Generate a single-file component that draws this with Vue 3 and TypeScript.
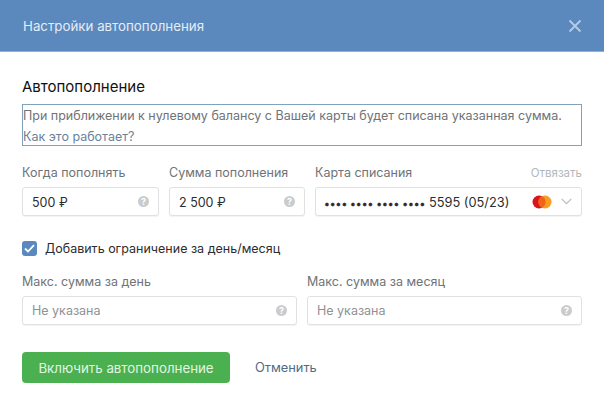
<script setup lang="ts">
import { ref } from 'vue'

const limitEnabled = ref(true)
</script>

<template>
  <div class="modal">
    <header class="modal-head">
      <span class="modal-title">Настройки автопополнения</span>
      <svg class="close" width="14" height="14" viewBox="0 0 14 14">
        <path d="M1.5 1.5l11 11M12.5 1.5l-11 11" />
      </svg>
    </header>

    <div class="modal-body">
      <h2 class="section-title">Автопополнение</h2>
      <div class="info">
        При приближении к нулевому балансу с Вашей карты будет списана указанная сумма.<br />
        <a class="info-link">Как это работает?</a>
      </div>

      <div class="row row-top">
        <div class="field">
          <div class="label">Когда пополнять</div>
          <div class="input">
            <span class="value">500 ₽</span>
            <span class="hint">?</span>
          </div>
        </div>
        <div class="field">
          <div class="label">Сумма пополнения</div>
          <div class="input">
            <span class="value">2 500 ₽</span>
            <span class="hint">?</span>
          </div>
        </div>
        <div class="field">
          <div class="label label-split">
            <span>Карта списания</span>
            <span class="unlink">Отвязать</span>
          </div>
          <div class="input">
            <span class="value card-value"><span class="dots">•••• •••• •••• ••••</span> 5595 (05/23)</span>
            <svg class="mc" width="20" height="14" viewBox="0 0 20 14">
              <circle cx="7" cy="7" r="6.5" fill="#d9141e" />
              <circle cx="13" cy="7" r="6.5" fill="#f59e1f" />
              <path d="M10 1.2a6.5 6.5 0 0 1 0 11.6a6.5 6.5 0 0 1 0-11.6z" fill="#f0641a" />
            </svg>
            <svg class="chevron" width="11" height="7" viewBox="0 0 11 7">
              <path d="M.7.8l4.8 4.8L10.3.8" />
            </svg>
          </div>
        </div>
      </div>

      <label class="check">
        <input v-model="limitEnabled" type="checkbox" />
        <span class="box">
          <svg width="11" height="9" viewBox="0 0 11 9">
            <path d="M1 4.5l3 3L10 1.2" />
          </svg>
        </span>
        <span>Добавить ограничение за день/месяц</span>
      </label>

      <div class="row row-limits">
        <div class="field">
          <div class="label">Макс. сумма за день</div>
          <div class="input">
            <span class="placeholder">Не указана</span>
            <span class="hint">?</span>
          </div>
        </div>
        <div class="field">
          <div class="label">Макс. сумма за месяц</div>
          <div class="input">
            <span class="placeholder">Не указана</span>
            <span class="hint">?</span>
          </div>
        </div>
      </div>

      <div class="actions">
        <button class="btn-primary" type="button">Включить автопополнение</button>
        <a class="cancel">Отменить</a>
      </div>
    </div>
  </div>
</template>

<style>
html,
body {
  margin: 0;
  background: #fff;
}
</style>

<style scoped>
.modal {
  width: 604px;
  height: 412px;
  overflow: hidden;
  font-family: Inter, "Noto Sans", sans-serif;
  font-size: 12.5px;
  color: #2c2d2e;
}

.modal-head {
  height: 52px;
  box-sizing: border-box;
  padding: 0 22px 0 23px;
  display: flex;
  align-items: center;
  justify-content: space-between;
  background: #5b88bd;
  border-bottom: 1px solid #8fb0d3;
}

.modal-title {
  font-size: 13.3px;
  color: #e4edf6;
}

.close path {
  fill: none;
  stroke: #b4cde6;
  stroke-width: 1.8;
}

.modal-body {
  padding: 0 22px;
}

.section-title {
  margin: 25px 0 0;
  font-size: 15px;
  line-height: 20px;
  font-weight: 400;
  color: #111;
}

.info {
  margin-top: 7px;
  height: 42px;
  box-sizing: border-box;
  border: 1px solid #7fa3bd;
  font-size: 12.5px;
  line-height: 21px;
  color: #6f7378;
  white-space: nowrap;
}

.info-link {
  color: #6b8299;
}

.row {
  display: flex;
  gap: 10px;
}

.row-top {
  margin-top: 17px;
}

.row-top .field {
  width: 136px;
}

.row-top .field:first-child {
  width: 137px;
}

.row-top .field:last-child {
  width: 267px;
}

.row-limits .field {
  flex: 1;
}

.label {
  height: 24px;
  line-height: 20px;
  color: #6f7378;
}

.label-split {
  display: flex;
  justify-content: space-between;
}

.unlink {
  font-size: 11.5px;
  color: #b4b7ba;
}

.input {
  height: 29px;
  box-sizing: border-box;
  padding: 0 9px;
  display: flex;
  align-items: center;
  background: #fff;
  border: 1px solid #dfe1e4;
  border-radius: 3px;
  box-shadow: 0 1px 1px rgba(0, 0, 0, 0.05);
}

.value {
  flex: 1;
  padding-top: 2px;
  color: #2c2d2e;
}

.card-value {
  font-size: 12.8px;
  margin-left: -1px;
  white-space: nowrap;
}

.dots {
  font-size: 10.3px;
  -webkit-text-stroke: 0.3px #2c2d2e;
}

.placeholder {
  flex: 1;
  color: #8f9296;
}

.hint {
  width: 11px;
  height: 11px;
  border-radius: 50%;
  background: #c9cbcd;
  color: #fff;
  font-size: 9px;
  font-weight: 700;
  line-height: 11px;
  text-align: center;
}

.mc {
  margin-right: 9px;
  flex-shrink: 0;
}

.chevron {
  flex-shrink: 0;
}

.chevron path {
  fill: none;
  stroke: #b9bcc0;
  stroke-width: 1.2;
}

.check {
  margin-top: 25px;
  height: 15px;
  display: flex;
  align-items: center;
  gap: 8px;
  color: #2c2d2e;
}

.check input {
  display: none;
}

.box {
  width: 15px;
  height: 15px;
  border-radius: 3px;
  background: #5b88bd;
  display: flex;
  align-items: center;
  justify-content: center;
}

.box path {
  fill: none;
  stroke: #fff;
  stroke-width: 1.8;
}

.row-limits {
  margin-top: 16px;
}

.actions {
  margin-top: 27px;
  display: flex;
  align-items: center;
  gap: 25px;
}

.btn-primary {
  width: 208px;
  height: 31px;
  padding: 0;
  border: 0;
  border-radius: 4px;
  background: #4bb04f;
  color: #e3f5e3;
  font-family: inherit;
  font-size: 13.3px;
}

.cancel {
  font-size: 12.8px;
  color: #4f6b85;
}
</style>
